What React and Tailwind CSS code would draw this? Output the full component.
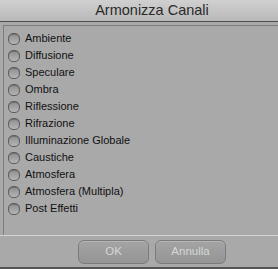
import React from "react";

const items = [
  "Ambiente",
  "Diffusione",
  "Speculare",
  "Ombra",
  "Riflessione",
  "Rifrazione",
  "Illuminazione Globale",
  "Caustiche",
  "Atmosfera",
  "Atmosfera (Multipla)",
  "Post Effetti",
];

export default function App() {
  return (
    <div
      className="w-[278px] h-[269px] bg-[#a9a9a9] flex flex-col overflow-hidden"
      style={{ fontFamily: '"Lucida Grande", "Liberation Sans", sans-serif' }}
    >
      <div className="h-[22px] shrink-0 bg-gradient-to-b from-[#d0d0d0] to-[#b9b9b9] border-b border-[#4f4f4f] flex items-center justify-center pl-[26px] text-[14.5px] text-[#2a2a2a]">
        Armonizza Canali
      </div>
      <div className="mt-[3px] ml-[3px] h-[210px] shrink-0 border-t border-l border-[#7d7d7d] pt-[4px] flex flex-col">
        {items.map((t) => (
          <div key={t} className="h-[17px] flex items-center gap-[5px] pl-[4px]">
            <span className="w-[12px] h-[12px] rounded-[5px] border border-[#5e5e5e] bg-gradient-to-b from-[#8f8f8f] to-[#b4b4b4] shadow-[inset_0_1px_1px_rgba(0,0,0,0.25)]" />
            <span className="text-[11px] text-[#111] leading-none">{t}</span>
          </div>
        ))}
      </div>
      <div className="h-px bg-[#d2d2d2] shrink-0" />
      <div className="flex-1 flex items-start pt-[4px] pl-[78px] gap-[6px]">
        <button className="w-[71px] h-[24px] rounded-[6px] border border-[#7b7b7b] bg-gradient-to-b from-[#a4a4a4] to-[#959595] text-[11.5px] text-[#d6d6d6] shadow-[inset_0_1px_0_rgba(255,255,255,0.2)]">
          OK
        </button>
        <button className="w-[71px] h-[24px] rounded-[6px] border border-[#7b7b7b] bg-gradient-to-b from-[#a4a4a4] to-[#959595] text-[11.5px] text-[#d6d6d6] shadow-[inset_0_1px_0_rgba(255,255,255,0.2)]">
          Annulla
        </button>
      </div>
      <div className="h-[2px] bg-[#555] shrink-0" />
    </div>
  );
}
